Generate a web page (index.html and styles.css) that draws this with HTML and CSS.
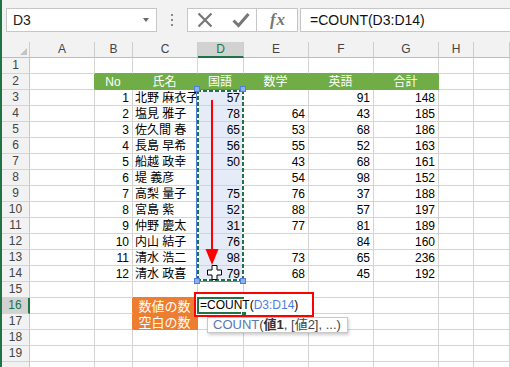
FILE: index.html
```html
<!DOCTYPE html>
<html lang="ja">
<head>
<meta charset="utf-8">
<title>COUNT</title>
<link rel="stylesheet" href="styles.css">
</head>
<body>
<div class="app">
  <div class="fbar">
    <div class="namebox"><span>D3</span><span class="nb-arrow"></span></div>
    <div class="grip"><i></i><i></i><i></i></div>
    <div class="btns">
      <svg class="ic-x" width="16" height="16" viewBox="0 0 16 16"><path d="M1.5 1.5L14.5 14.5M14.5 1.5L1.5 14.5" stroke="#777" stroke-width="2.2" fill="none"/></svg>
      <svg class="ic-ok" width="18" height="16" viewBox="0 0 18 16"><path d="M1.5 8.5L6.5 13.5L16.5 2" stroke="#777" stroke-width="3" fill="none"/></svg>
    </div>
    <div class="fxbox"><span class="fx">fx</span></div>
    <div class="finput">=COUNT(D3:D14)</div>
  </div>

  <div class="sheet">
    <div class="ch corner"><span class="tri"></span></div>
    <div class="ch">A</div><div class="ch">B</div><div class="ch">C</div><div class="ch sel">D</div><div class="ch">E</div><div class="ch">F</div><div class="ch">G</div><div class="ch">H</div><div class="ch"></div>

    <div class="rh">1</div><div class="c"></div><div class="c gt"></div><div class="c gt"></div><div class="c gt"></div><div class="c gt"></div><div class="c gt"></div><div class="c gt"></div><div class="c"></div><div class="c"></div>

    <div class="rh">2</div><div class="c ge"></div><div class="c g">No</div><div class="c g">氏名</div><div class="c g">国語</div><div class="c g">数学</div><div class="c g">英語</div><div class="c g">合計</div><div class="c"></div><div class="c"></div>

    <div class="rh">3</div><div class="c"></div><div class="c r">1</div><div class="c l">北野 麻衣子</div><div class="c r s">57</div><div class="c r"></div><div class="c r">91</div><div class="c r">148</div><div class="c"></div><div class="c"></div>
    <div class="rh">4</div><div class="c"></div><div class="c r">2</div><div class="c l">塩見 雅子</div><div class="c r s">78</div><div class="c r">64</div><div class="c r">43</div><div class="c r">185</div><div class="c"></div><div class="c"></div>
    <div class="rh">5</div><div class="c"></div><div class="c r">3</div><div class="c l">佐久間 春</div><div class="c r s">65</div><div class="c r">53</div><div class="c r">68</div><div class="c r">186</div><div class="c"></div><div class="c"></div>
    <div class="rh">6</div><div class="c"></div><div class="c r">4</div><div class="c l">長島 早希</div><div class="c r s">56</div><div class="c r">55</div><div class="c r">52</div><div class="c r">163</div><div class="c"></div><div class="c"></div>
    <div class="rh">7</div><div class="c"></div><div class="c r">5</div><div class="c l">船越 政幸</div><div class="c r s">50</div><div class="c r">43</div><div class="c r">68</div><div class="c r">161</div><div class="c"></div><div class="c"></div>
    <div class="rh">8</div><div class="c"></div><div class="c r">6</div><div class="c l">堤 義彦</div><div class="c r s"></div><div class="c r">54</div><div class="c r">98</div><div class="c r">152</div><div class="c"></div><div class="c"></div>
    <div class="rh">9</div><div class="c"></div><div class="c r">7</div><div class="c l">高梨 量子</div><div class="c r s">75</div><div class="c r">76</div><div class="c r">37</div><div class="c r">188</div><div class="c"></div><div class="c"></div>
    <div class="rh">10</div><div class="c"></div><div class="c r">8</div><div class="c l">宮島 紫</div><div class="c r s">52</div><div class="c r">88</div><div class="c r">57</div><div class="c r">197</div><div class="c"></div><div class="c"></div>
    <div class="rh">11</div><div class="c"></div><div class="c r">9</div><div class="c l">仲野 慶太</div><div class="c r s">31</div><div class="c r">77</div><div class="c r">81</div><div class="c r">189</div><div class="c"></div><div class="c"></div>
    <div class="rh">12</div><div class="c"></div><div class="c r">10</div><div class="c l">内山 結子</div><div class="c r s">76</div><div class="c r"></div><div class="c r">84</div><div class="c r">160</div><div class="c"></div><div class="c"></div>
    <div class="rh">13</div><div class="c"></div><div class="c r">11</div><div class="c l">清水 浩二</div><div class="c r s">98</div><div class="c r">73</div><div class="c r">65</div><div class="c r">236</div><div class="c"></div><div class="c"></div>
    <div class="rh">14</div><div class="c"></div><div class="c r">12</div><div class="c l">清水 政喜</div><div class="c r s">79</div><div class="c r">68</div><div class="c r">45</div><div class="c r">192</div><div class="c"></div><div class="c"></div>

    <div class="rh">15</div><div class="c"></div><div class="c"></div><div class="c ot"></div><div class="c"></div><div class="c"></div><div class="c"></div><div class="c"></div><div class="c"></div><div class="c"></div>
    <div class="rh sel">16</div><div class="c"></div><div class="c oe"></div><div class="c o">数値の数</div><div class="c"></div><div class="c"></div><div class="c"></div><div class="c"></div><div class="c"></div><div class="c"></div>
    <div class="rh">17</div><div class="c"></div><div class="c oe"></div><div class="c o">空白の数</div><div class="c"></div><div class="c"></div><div class="c"></div><div class="c"></div><div class="c"></div><div class="c"></div>
    <div class="rh">18</div><div class="c"></div><div class="c"></div><div class="c"></div><div class="c"></div><div class="c"></div><div class="c"></div><div class="c"></div><div class="c"></div><div class="c"></div>
    <div class="rh">19</div><div class="c"></div><div class="c"></div><div class="c"></div><div class="c"></div><div class="c"></div><div class="c"></div><div class="c"></div><div class="c"></div><div class="c"></div>
    <div class="rh"></div><div class="c"></div><div class="c"></div><div class="c"></div><div class="c"></div><div class="c"></div><div class="c"></div><div class="c"></div><div class="c"></div><div class="c"></div>
  </div>

  <!-- overlays -->
  <div class="range-line"></div>
  <div class="ants"></div>
  <span class="handle h-tl"></span><span class="handle h-tr"></span><span class="handle h-bl"></span><span class="handle h-br"></span>

  <svg class="arrow" width="16" height="167" viewBox="0 0 16 167"><rect x="6" y="1" width="2" height="151" fill="#ff0000"/><polygon points="0.5,150 13.5,150 7,166" fill="#ff0000"/></svg>

  <svg class="cursor" width="16" height="16" viewBox="0 0 16 16"><polygon points="5,0.5 10,0.5 10,5 14.5,5 14.5,10 10,10 10,14.5 5,14.5 5,10 0.5,10 0.5,5 5,5" fill="#fff" stroke="#000" stroke-width="1"/></svg>

  <div class="edit-box"></div>
  <div class="active"></div>
  <div class="edit-text">=COUNT(<span class="ref">D3:D14</span>)</div>
  <span class="fill-handle"></span>
  <div class="red-mark"></div>

  <div class="tip"><span class="tip-fn">COUNT</span>(<b>値1</b>, [値2], ...)</div>
</div>
</body>
</html>
```

FILE: styles.css
```css
* { box-sizing: border-box; }
html, body { margin: 0; padding: 0; }
body {
  width: 510px;
  height: 367px;
  overflow: hidden;
  background: #fff;
  font-family: "Liberation Sans", "Noto Sans CJK JP", sans-serif;
}
.app {
  position: relative;
  width: 510px;
  height: 367px;
  border-left: 2px solid #217346;
  overflow: hidden;
}

/* formula bar */
.fbar {
  height: 42px;
  background: #f2f2f2;
  display: flex;
  align-items: flex-start;
  padding: 8px 0 0 4px;
}
.namebox {
  width: 151px;
  height: 24px;
  background: #fff;
  border: 1px solid #c6c6c6;
  display: flex;
  align-items: center;
  justify-content: space-between;
  padding: 0 7px 0 6px;
  font-size: 14px;
  color: #222;
}
.nb-arrow {
  width: 0;
  height: 0;
  border-left: 3.5px solid transparent;
  border-right: 3.5px solid transparent;
  border-top: 4px solid #666;
}
.grip {
  width: 30px;
  height: 24px;
  display: flex;
  flex-direction: column;
  align-items: center;
  gap: 3px;
  padding-top: 6px;
}
.grip i {
  display: block;
  width: 2px;
  height: 2px;
  background: #8a8a8a;
}
.btns {
  width: 70px;
  height: 24px;
  background: #fff;
  border: 1px solid #c6c6c6;
  display: flex;
  align-items: center;
  padding-left: 9px;
}
.ic-ok { margin-left: 19px; }
.fxbox {
  width: 42px;
  height: 24px;
  margin-left: -1px;
  background: #fff;
  border: 1px solid #c6c6c6;
  display: flex;
  align-items: center;
  justify-content: center;
}
.fx {
  font-family: "Liberation Serif", serif;
  font-style: italic;
  font-weight: bold;
  font-size: 17px;
  color: #777;
  letter-spacing: 1px;
  line-height: 20px;
  margin-left: 2px;
}
.finput {
  flex: 1;
  height: 24px;
  margin-left: 2px;
  background: #fff;
  border: 1px solid #c6c6c6;
  border-right: none;
  padding-left: 9px;
  font-size: 14px;
  line-height: 22px;
  color: #111;
}

/* grid */
.sheet {
  display: grid;
  grid-template-columns: 28px 65px 38px 65px 46px 65px 65px 65px 35px 1fr;
  grid-auto-rows: 16px;
}
.c, .ch, .rh {
  border-right: 1px solid #d4d4d4;
  border-bottom: 1px solid #d4d4d4;
  font-size: 12px;
  line-height: 13px;
  display: flex;
  white-space: nowrap;
  overflow: hidden;
  color: #000;
}
.c { align-items: flex-end; padding: 0 3px 0 2px; }
.ch {
  background: #f2f2f2;
  border-right-color: #cdcdcd;
  border-bottom-color: #bdbdbd;
  align-items: center;
  justify-content: center;
  color: #444;
}
.ch.sel {
  background: #d2d2d2;
  color: #217346;
  border-bottom: 2px solid #217346;
}
.corner {
  justify-content: flex-end;
  align-items: flex-end;
  padding: 0 2px 2px 0;
}
.tri {
  width: 0;
  height: 0;
  border-left: 7px solid transparent;
  border-bottom: 7px solid #c4c4c4;
}
.rh {
  background: #f2f2f2;
  border-right-color: #c6c6c6;
  align-items: center;
  justify-content: center;
  color: #444;
}
.rh.sel {
  background: #d2d2d2;
  color: #217346;
  border-right: 2px solid #217346;
}
.r { justify-content: flex-end; }
.l { justify-content: flex-start; }
.s { background: #e6ecf7; }

.g {
  background: #70ad47;
  border-color: #70ad47;
  color: #fff;
  justify-content: center;
}
.gt { border-bottom-color: #70ad47; }
.ge { border-right-color: #70ad47; }

.o {
  background: #ed7d31;
  border-color: #ed7d31;
  color: #fff;
  justify-content: center;
  font-size: 13px;
}
.ot { border-bottom-color: #ed7d31; }
.oe { border-right-color: #ed7d31; }

/* overlays (coordinates relative to .app padding box, page x - 2) */
.range-line {
  position: absolute;
  left: 194px;
  top: 89px;
  width: 48px;
  height: 193px;
  border: 1px solid #4f7fdc;
}
.ants {
  position: absolute;
  left: 195px;
  top: 90px;
  width: 47px;
  height: 191px;
  background:
    repeating-linear-gradient(to right, #217346 0 4px, #fff 4px 6px) left top / 100% 2px no-repeat,
    repeating-linear-gradient(to right, #217346 0 4px, #fff 4px 6px) left bottom / 100% 2px no-repeat,
    repeating-linear-gradient(to bottom, #217346 0 4px, #fff 4px 6px) left top / 2px 100% no-repeat,
    repeating-linear-gradient(to bottom, #217346 0 4px, #fff 4px 6px) right top / 2px 100% no-repeat;
}
.handle {
  position: absolute;
  width: 6px;
  height: 6px;
  background: #8eb0ee;
  border: 1px solid #4f7fdc;
}
.h-tl { left: 192px; top: 86px; }
.h-tr { left: 238px; top: 86px; }
.h-bl { left: 192px; top: 278px; }
.h-br { left: 238px; top: 278px; }

.arrow { position: absolute; left: 203px; top: 99px; }
.cursor { position: absolute; left: 205px; top: 265px; }

.edit-box {
  position: absolute;
  left: 193px;
  top: 293px;
  width: 118px;
  height: 23px;
  background: #fff;
}
.active {
  position: absolute;
  left: 195px;
  top: 297px;
  width: 47px;
  height: 17px;
  border: 2px solid #217346;
}
.edit-text {
  position: absolute;
  left: 197px;
  top: 299px;
  width: 112px;
  height: 13px;
  padding-left: 1px;
  background: #fff;
  font-size: 12px;
  line-height: 13px;
  color: #000;
  white-space: nowrap;
}
.ref { color: #4a7ee6; }
.fill-handle {
  position: absolute;
  left: 239px;
  top: 311px;
  width: 6px;
  height: 6px;
  background: #217346;
  border: 1px solid #fff;
}
.red-mark {
  position: absolute;
  left: 192px;
  top: 292px;
  width: 120px;
  height: 25px;
  border: 2px solid #ff0000;
}
.tip {
  position: absolute;
  left: 205px;
  top: 317px;
  width: 141px;
  height: 16px;
  background: #fff;
  border: 1px solid #c8c8c8;
  box-shadow: 1px 2px 3px rgba(0, 0, 0, 0.2);
  padding-left: 5px;
  font-size: 13px;
  line-height: 14px;
  color: #444;
  white-space: nowrap;
}
.tip b { font-weight: bold; color: #333; }
.tip-fn { color: #5a78b0; }
```
